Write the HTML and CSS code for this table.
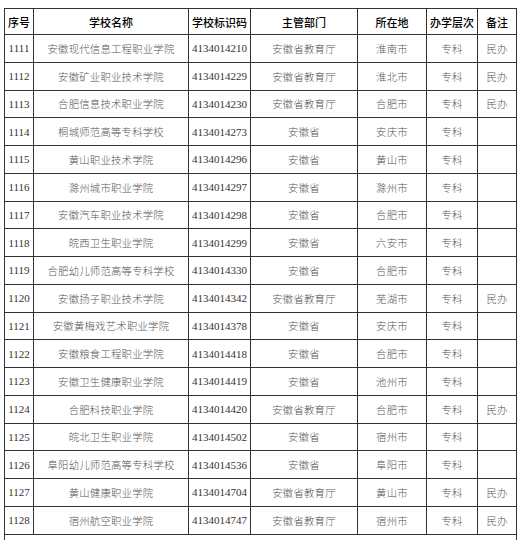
FILE: index.html
```html
<!DOCTYPE html>
<html lang="zh-CN">
<head>
<meta charset="utf-8">
<link rel="stylesheet" href="styles.css">
</head>
<body>
<div class="page">
<table class="grid">
<colgroup>
<col class="c1"><col class="c2"><col class="c3"><col class="c4"><col class="c5"><col class="c6"><col class="c7">
</colgroup>
<thead>
<tr class="head"><th>序号</th><th>学校名称</th><th>学校标识码</th><th>主管部门</th><th>所在地</th><th>办学层次</th><th>备注</th></tr>
</thead>
<tbody>
<tr><td class="num">1111</td><td>安徽现代信息工程职业学院</td><td class="num">4134014210</td><td>安徽省教育厅</td><td>淮南市</td><td>专科</td><td>民办</td></tr>
<tr><td class="num">1112</td><td>安徽矿业职业技术学院</td><td class="num">4134014229</td><td>安徽省教育厅</td><td>淮北市</td><td>专科</td><td>民办</td></tr>
<tr><td class="num">1113</td><td>合肥信息技术职业学院</td><td class="num">4134014230</td><td>安徽省教育厅</td><td>合肥市</td><td>专科</td><td>民办</td></tr>
<tr><td class="num">1114</td><td>桐城师范高等专科学校</td><td class="num">4134014273</td><td>安徽省</td><td>安庆市</td><td>专科</td><td></td></tr>
<tr><td class="num">1115</td><td>黄山职业技术学院</td><td class="num">4134014296</td><td>安徽省</td><td>黄山市</td><td>专科</td><td></td></tr>
<tr><td class="num">1116</td><td>滁州城市职业学院</td><td class="num">4134014297</td><td>安徽省</td><td>滁州市</td><td>专科</td><td></td></tr>
<tr><td class="num">1117</td><td>安徽汽车职业技术学院</td><td class="num">4134014298</td><td>安徽省</td><td>合肥市</td><td>专科</td><td></td></tr>
<tr><td class="num">1118</td><td>皖西卫生职业学院</td><td class="num">4134014299</td><td>安徽省</td><td>六安市</td><td>专科</td><td></td></tr>
<tr><td class="num">1119</td><td>合肥幼儿师范高等专科学校</td><td class="num">4134014330</td><td>安徽省</td><td>合肥市</td><td>专科</td><td></td></tr>
<tr><td class="num">1120</td><td>安徽扬子职业技术学院</td><td class="num">4134014342</td><td>安徽省教育厅</td><td>芜湖市</td><td>专科</td><td>民办</td></tr>
<tr><td class="num">1121</td><td>安徽黄梅戏艺术职业学院</td><td class="num">4134014378</td><td>安徽省</td><td>安庆市</td><td>专科</td><td></td></tr>
<tr><td class="num">1122</td><td>安徽粮食工程职业学院</td><td class="num">4134014418</td><td>安徽省</td><td>合肥市</td><td>专科</td><td></td></tr>
<tr><td class="num">1123</td><td>安徽卫生健康职业学院</td><td class="num">4134014419</td><td>安徽省</td><td>池州市</td><td>专科</td><td></td></tr>
<tr><td class="num">1124</td><td>合肥科技职业学院</td><td class="num">4134014420</td><td>安徽省教育厅</td><td>合肥市</td><td>专科</td><td>民办</td></tr>
<tr><td class="num">1125</td><td>皖北卫生职业学院</td><td class="num">4134014502</td><td>安徽省</td><td>宿州市</td><td>专科</td><td></td></tr>
<tr><td class="num">1126</td><td>阜阳幼儿师范高等专科学校</td><td class="num">4134014536</td><td>安徽省</td><td>阜阳市</td><td>专科</td><td></td></tr>
<tr><td class="num">1127</td><td>黄山健康职业学院</td><td class="num">4134014704</td><td>安徽省教育厅</td><td>黄山市</td><td>专科</td><td>民办</td></tr>
<tr><td class="num">1128</td><td>宿州航空职业学院</td><td class="num">4134014747</td><td>安徽省教育厅</td><td>宿州市</td><td>专科</td><td>民办</td></tr>
<tr class="tail"><td colspan="7"></td></tr>
</tbody>
</table>
</div>
</body>
</html>
```
FILE: styles.css
```css
html, body {
  margin: 0;
  padding: 0;
  background: #ffffff;
}
.page {
  padding: 8px 0 0 4px;
  height: 540px;
  overflow: hidden;
  box-sizing: border-box;
}
.grid {
  border-collapse: collapse;
  table-layout: fixed;
  width: 512px;
  font-family: "Noto Sans CJK SC", "Liberation Serif", sans-serif;
}
.c1 { width: 29px; }
.c2 { width: 155px; }
.c3 { width: 62px; }
.c4 { width: 107px; }
.c5 { width: 69px; }
.c6 { width: 51px; }
.c7 { width: 39px; }
.grid th, .grid td {
  border: 1.5px solid #333;
  padding: 0;
  text-align: center;
  white-space: nowrap;
  overflow: hidden;
}
.grid th {
  height: 25px;
  font-size: 11px;
  font-weight: 500;
  color: #000;
}
.grid td {
  height: 26.75px;
  font-size: 10.4px;
  font-weight: 300;
  color: #555;
  letter-spacing: 0.2px;
}
.grid td.num {
  font-family: "Liberation Serif", serif;
  font-size: 11px;
  letter-spacing: 0;
  color: #333;
}
.grid .tail td {
  height: 20px;
}
```
